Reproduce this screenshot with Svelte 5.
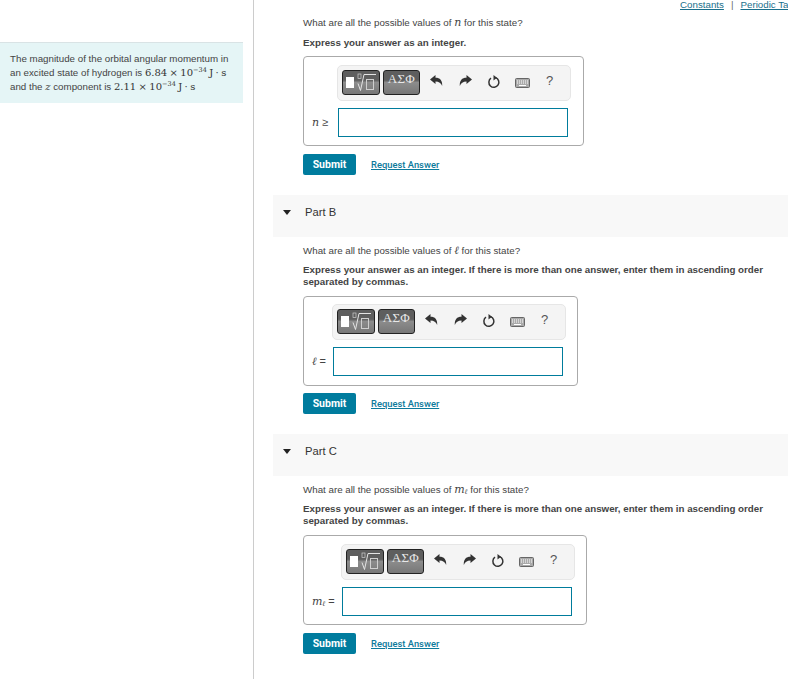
<script>
  const parts = [
    { id: "A", sym: "n", label: "≥", labelW: 34, width: 281, hint: "Express your answer as an integer." },
    { id: "B", title: "Part B", sym: "ℓ", label: "=", labelW: 29, width: 275, hint: "Express your answer as an integer. If there is more than one answer, enter them in ascending order separated by commas." },
    { id: "C", title: "Part C", sym: "m", sub: "ℓ", label: "=", labelW: 38, width: 284, hint: "Express your answer as an integer. If there is more than one answer, enter them in ascending order separated by commas." }
  ];
</script>

{#snippet symbol(part)}
  <i class="math">{part.sym}</i>{#if part.sub}<sub class="math-sub">{part.sub}</sub>{/if}
{/snippet}

<div class="page">
  <aside class="side">
    <div class="intro">
      The magnitude of the orbital angular momentum in
      an excited state of hydrogen is <span class="num">6.84 × 10<sup>−34</sup> J · s</span>
      and the <i class="math small">z</i> component is <span class="num">2.11 × 10<sup>−34</sup> J · s</span>
    </div>
  </aside>

  <main class="main">
    <div class="top-links">
      <a href="#c">Constants</a><span class="sep">|</span><a href="#p">Periodic Table</a>
    </div>

    {#each parts as part}
      <section class="part part-{part.id}">
        {#if part.title}
          <header class="part-head">
            <span class="caret"></span>
            <span>{part.title}</span>
          </header>
        {/if}
        <div class="part-body">
          <p class="question">What are all the possible values of {@render symbol(part)} for this state?</p>
          <p class="hint">{part.hint}</p>

          <div class="answer" style="width: {part.width}px">
            <div class="toolbar" style="margin-left: {part.labelW - 1}px">
              <button class="tpl tpl-a" aria-label="Templates">
                <span class="fill"></span>
                <svg width="20" height="20" viewBox="0 0 20 20">
                  <path d="M1 10.500l2.500 7L7 1.500h12" fill="none" stroke="#e4e4e4" stroke-width="1"/>
                  <rect x="9.500" y="6.500" width="7" height="10" fill="none" stroke="#cfcfcf" stroke-width="1"/>
                  <rect x="1" y="1" width="3" height="4.500" fill="none" stroke="#cfcfcf" stroke-width=".7"/>
                </svg>
              </button>
              <button class="tpl tpl-b">ΑΣΦ</button>

              <span class="tool undo">
                <svg width="13" height="12" viewBox="0 0 13 12"><path d="M0 4.500 5.500 0v2.800c4.500 0 7 2.600 6.700 8.200C11 8 9 6.400 5.500 6.400V9z" fill="#333"/></svg>
              </span>
              <span class="tool redo">
                <svg width="13" height="12" viewBox="0 0 13 12"><path d="M13 4.500 7.500 0v2.800C3 2.800.5 5.400.8 11 2 8 4 6.400 7.500 6.400V9z" fill="#333"/></svg>
              </span>
              <span class="tool reset">
                <svg width="14" height="14" viewBox="0 0 14 14"><path d="M8.600 2.600A5 5 0 1 1 4 3.200" fill="none" stroke="#333" stroke-width="1.500"/><path d="M6.500 0v5.500L10 2.700z" fill="#333"/></svg>
              </span>
              <span class="tool kbd">
                <svg width="15" height="10" viewBox="0 0 15 10"><rect x=".5" y=".5" width="14" height="9" rx="1" fill="#aaa" stroke="#666"/><path d="M2 3h11M2 5h11" stroke="#fff" stroke-dasharray="1 1"/><path d="M4 7.500h7" stroke="#fff"/></svg>
              </span>
              <span class="tool help">?</span>
            </div>

            <div class="entry">
              <span class="entry-label" style="width: {part.labelW}px">{@render symbol(part)} <span class="rel">{part.label}</span></span>
              <div class="field"></div>
            </div>
          </div>

          <div class="actions">
            <button class="submit">Submit</button>
            <a class="request" href="#r">Request Answer</a>
          </div>
        </div>
      </section>
    {/each}
  </main>
</div>

<style>
  :global(body) {
    background: #fff;
    font-family: "Liberation Sans", Arial, sans-serif;
    color: #333;
  }

  .page {
    display: flex;
    width: 788px;
    height: 679px;
    overflow: hidden;
  }

  .side {
    width: 253px;
    flex: none;
    border-right: 1px solid #ccc;
    padding-top: 42px;
  }

  .intro {
    width: 225px;
    height: 51px;
    padding: 9px 8px 0 10px;
    background: #e5f5f6;
    border-top: 1px solid #d9e3e5;
    font-size: 9.750px;
    line-height: 14px;
    color: #444;
  }

  .num {
    font-family: "DejaVu Serif", serif;
    font-size: 10px;
    word-spacing: -.8px;
    color: #333;
  }

  .num sup {
    font-size: 6.500px;
    line-height: 0;
  }

  .math {
    font-family: "DejaVu Serif", serif;
    font-style: italic;
    font-size: 11px;
  }

  .math.small {
    font-size: 10px;
  }

  .math-sub {
    font-family: "DejaVu Serif", serif;
    font-style: italic;
    font-size: 7px;
    line-height: 0;
    vertical-align: -1px;
  }

  .main {
    flex: none;
    width: 534px;
    position: relative;
    padding-left: 19px;
    box-sizing: border-box;
  }

  .top-links {
    position: absolute;
    top: -1px;
    left: 426px;
    width: 108px;
    overflow: hidden;
    white-space: nowrap;
    font-size: 9.750px;
    line-height: 11px;
    color: #666;
  }

  .top-links a {
    color: #1a6f8c;
    text-decoration: underline;
  }

  .sep {
    margin: 0 7px;
  }

  .part-body {
    padding-left: 30px;
  }

  .part-A {
    padding-top: 17px;
  }

  .part-head {
    display: flex;
    align-items: flex-start;
    height: 42px;
    padding-top: 11px;
    box-sizing: border-box;
    background: #f8f8f8;
    font-size: 11.200px;
    line-height: 13px;
    color: #333;
    width: 515px;
  }

  .caret {
    width: 0;
    height: 0;
    margin: 4px 14px 0 10px;
    border-left: 4.500px solid transparent;
    border-right: 4.500px solid transparent;
    border-top: 5px solid #222;
  }

  .part-B,
  .part-C {
    margin-top: 20px;
  }

  .part-B .part-body,
  .part-C .part-body {
    padding-top: 8px;
  }

  .question {
    margin: 0;
    height: 12px;
    font-size: 9.750px;
    line-height: 12px;
    color: #444;
  }

  .hint {
    margin: 7px 0 8px;
    width: 470px;
    font-size: 9.750px;
    line-height: 12px;
    font-weight: 700;
    color: #444;
  }

  .part-A .hint {
    margin: 8px 0 7px;
  }

  .answer {
    height: 90px;
    box-sizing: border-box;
    padding: 8px 0 0;
    border: 1px solid #aaa;
    border-radius: 4px;
  }

  .part-B .answer {
    padding-top: 7px;
  }

  .toolbar {
    display: flex;
    align-items: flex-start;
    width: 234px;
    height: 36px;
    box-sizing: border-box;
    padding: 4px 0 0 4px;
    background: #f4f4f4;
    border: 1px solid #e6e6e6;
    border-radius: 5px;
  }

  .tpl {
    height: 25px;
    box-sizing: border-box;
    padding: 0;
    border: 1px solid #222;
    border-radius: 3px;
    background: linear-gradient(#5e5e5e 0 40%, #8c8c8c 50%, #777 100%);
    color: #e8e8e8;
  }

  .tpl-a {
    display: flex;
    width: 38px;
    align-items: center;
    padding-left: 3px;
    gap: 3px;
  }

  .fill {
    width: 8px;
    height: 11px;
    background: #fff;
    flex: none;
  }

  .tpl-b {
    width: 37px;
    margin-left: 3px;
    padding-bottom: 8px;
    font-family: "Liberation Serif", serif;
    font-size: 13px;
    line-height: 15px;
    letter-spacing: .3px;
  }

  .tool {
    display: flex;
    justify-content: center;
    flex: none;
    margin-top: 5px;
  }

  .undo { margin-left: 10px; }
  .redo { margin-left: 16px; }
  .reset { margin-left: 15px; }
  .kbd { margin-left: 14px; margin-top: 8px; }

  .help {
    margin-left: 16px;
    margin-top: 3px;
    font-size: 13px;
    color: #555;
  }

  .entry {
    display: flex;
    align-items: center;
    margin-top: 7px;
  }

  .entry-label {
    flex: none;
    box-sizing: border-box;
    padding-left: 8px;
    font-size: 10px;
    white-space: nowrap;
    color: #444;
  }

  .rel {
    font-size: 11px;
  }

  .field {
    width: 230px;
    height: 29px;
    box-sizing: border-box;
    border: 1px solid #007c9c;
    background: #fff;
  }

  .actions {
    display: flex;
    align-items: center;
    margin-top: 8px;
  }

  .part-B .actions {
    margin-top: 7px;
  }

  .submit {
    width: 53px;
    height: 21px;
    padding: 0;
    border: 0;
    border-radius: 2px;
    background: #007c9e;
    color: #fff;
    font-family: Roboto, sans-serif;
    font-size: 10.500px;
    font-weight: 700;
  }

  .request {
    margin-left: 15px;
    font-family: Roboto, sans-serif;
    font-size: 9.400px;
    font-weight: 500;
    color: #0d7a9b;
    text-decoration: underline;
  }
</style>
